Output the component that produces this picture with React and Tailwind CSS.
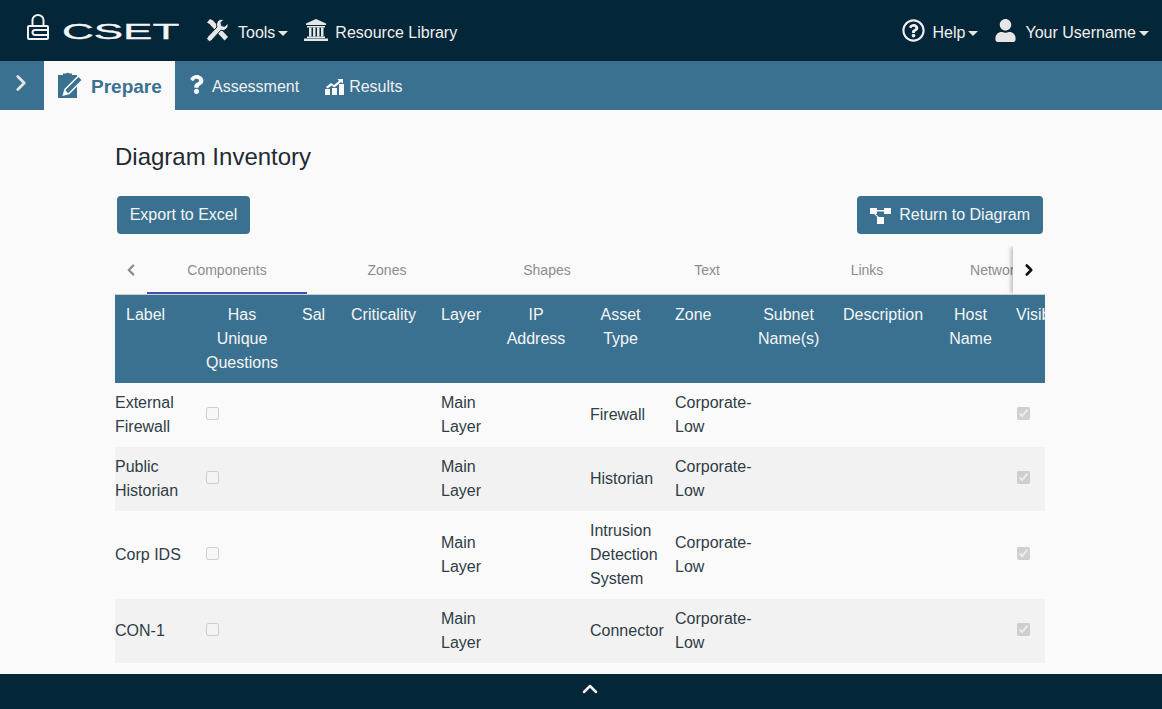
import React from "react";
import { FaRegQuestionCircle, FaUser, FaQuestion } from "react-icons/fa";
import { FiChevronRight, FiChevronUp } from "react-icons/fi";

const columns = [79, 96, 49, 90, 65, 84, 85, 83, 85, 106, 67, 90];

const headers = [
  { label: "Label", className: "text-left" },
  { label: "Has Unique Questions", className: "text-center" },
  { label: "Sal", className: "text-left" },
  { label: "Criticality", className: "text-left" },
  { label: "Layer", className: "text-left" },
  { label: "IP Address", className: "text-center" },
  { label: "Asset Type", className: "text-center" },
  { label: "Zone", className: "text-left" },
  { label: "Subnet Name(s)", className: "text-center" },
  { label: "Description", className: "text-left" },
  { label: "Host Name", className: "text-center" },
  { label: "Visible", className: "text-left" },
];

const rows = [
  { label: "External Firewall", type: "Firewall" },
  { label: "Public Historian", type: "Historian" },
  { label: "Corp IDS", type: "Intrusion Detection System" },
  { label: "CON-1", type: "Connector" },
];

const tabs = ["Components", "Zones", "Shapes", "Text", "Links", "Network Warnings"];

const Caret = () => (
  <span className="ml-[3px] mt-[1px] h-0 w-0 border-x-[5px] border-t-[5px] border-x-transparent border-t-[#e6e6e6]" />
);

const LockLogo = () => (
  <svg width="22" height="26" viewBox="0 0 22 26" fill="none" stroke="#f2f2f2" strokeWidth="2">
    <path d="M5.500 12V6a5.500 5 0 0 1 11 0v6" />
    <rect x="1" y="12" width="20" height="13" rx="1" />
    <path d="M21 16H8a2.500 2.500 0 0 0 0 5h13" />
  </svg>
);

const ToolsIcon = () => (
  <svg width="24" height="24" viewBox="0 0 24 24" className="mb-[6px] mr-2" fill="#e6e6e6">
    <path d="M1 4.500l3-3.500 3 1.500 15 16.500-3.500 3.500L3.500 6z" />
    <path d="M16 1.200a5.500 5.500 0 0 1 2 .3l-3 3 .6 3.200 3.200.6 3-3a5.500 5.500 0 0 1-7 7L5.500 22.500a2.500 2.500 0 0 1-3.800-3.800L11 9a5.500 5.500 0 0 1 5-7.800z" stroke="#032638" strokeWidth="1" />
  </svg>
);

const LibraryIcon = () => (
  <svg width="24" height="22" viewBox="0 0 24 22" className="mb-[6px] mr-[7px]" fill="#e6e6e6">
    <path d="M12 0l10 4.500v1.500H2V4.500z" />
    <rect x="3" y="7" width="18" height="1.500" />
    <rect x="5" y="8.500" width="2.500" height="9" />
    <rect x="9" y="8.500" width="2.500" height="9" />
    <rect x="13" y="8.500" width="2.500" height="9" />
    <rect x="17" y="8.500" width="2.500" height="9" />
    <rect x="3" y="17.500" width="18" height="1.500" />
    <rect x="0" y="19.500" width="24" height="2.500" />
  </svg>
);

const ClipboardIcon = () => (
  <svg width="25" height="27" viewBox="0 0 25 27">
    <path fill="#3a7191" d="M0 3h5V1.500h3a2 1.500 0 0 1 3.500 0h2.500V3h5v23H0z" />
    <path fill="#3a7191" stroke="#fafafa" strokeWidth="1.500" d="M20.500 4l4 4L11 21.500 5.500 23 7 17.500z" />
    <path fill="#fafafa" d="M7 18l3.500 3.500-5 1.500z" />
  </svg>
);

const ResultsIcon = () => (
  <svg width="19" height="17" viewBox="0 0 19 17" fill="#fafafa">
    <rect x="0" y="11" width="5" height="6" />
    <rect x="7" y="10" width="5" height="7" />
    <rect x="14" y="6" width="5" height="11" />
    <path d="M1 9l5-4 3 2 5-4-1.500-2H18v4.500L16 4l-6.500 5.500-3-2L2.500 10.500z" />
  </svg>
);

const DiagramIcon = () => (
  <svg width="21" height="17" viewBox="0 0 21 17" fill="#fafafa">
    <rect x="0" y="1" width="7" height="6" />
    <rect x="14" y="1" width="7" height="6" />
    <rect x="7" y="10" width="7" height="7" />
    <rect x="7" y="3" width="7" height="1.500" />
    <path d="M4 7h1.500l3.500 3H7.500z" />
  </svg>
);

const NavItem = ({ icon, label, caret }) => (
  <div className="flex items-center">
    {icon}
    <span className="text-[16px] text-[#f0f0f0]">{label}</span>
    {caret && <Caret />}
  </div>
);

const App = () => {
  return (
    <div className="flex h-screen flex-col overflow-hidden bg-[#fafafa] font-['Liberation_Sans',Arial,sans-serif] text-[16px] leading-6 text-[#2f3d46]">
      <header className="flex h-[61px] shrink-0 items-center bg-[#032638] pl-[27px] pr-[13px]">
        <div className="mb-[7px] flex items-end">
          <LockLogo />
          <span className="ml-[13px] w-[117px] origin-left scale-x-[2] text-[22px] leading-[16px] text-[#f5f5f5] [-webkit-text-stroke:0.3px_#f5f5f5]">
            CSET
          </span>
        </div>
        <div className="ml-[27px] mt-[5px] flex items-center">
          <NavItem icon={<ToolsIcon />} label="Tools" caret />
        </div>
        <div className="ml-[16px] mt-[5px] flex items-center">
          <NavItem icon={<LibraryIcon />} label="Resource Library" />
        </div>
        <div className="ml-auto mt-[5px] flex items-center">
          <NavItem icon={<FaRegQuestionCircle className="mb-[6px] mr-2 text-[23px] text-[#f0f0f0]" />} label="Help" caret />
          <div className="ml-[16px]">
            <NavItem icon={<FaUser className="mb-[6px] mr-2 text-[23px] text-[#e6e6e6]" />} label="Your Username" caret />
          </div>
        </div>
      </header>

      <nav className="flex h-[49px] shrink-0 items-center bg-[#3a7191]">
        <div className="flex w-[44px] justify-center">
          <FiChevronRight className="mb-[5px] mr-[3px] text-[26px] text-[#e6e6e6]" strokeWidth={2.500} />
        </div>
        <div className="flex h-full w-[131px] items-center bg-[#fafafa] pl-[14px]">
          <ClipboardIcon />
          <span className="ml-[8px] mt-[2px] text-[19px] font-bold text-[#3a7191]">Prepare</span>
        </div>
        <div className="ml-[12px] mt-[2px] flex items-center">
          <FaQuestion className="mb-1 mr-[6px] text-[19px] text-[#fafafa]" />
          <span className="text-[#f0f0f0]">Assessment</span>
        </div>
        <div className="ml-[26px] mt-[2px] flex items-center">
          <ResultsIcon />
          <span className="ml-[5px] text-[#f0f0f0]">Results</span>
        </div>
      </nav>

      <main className="min-h-0 flex-1 overflow-hidden pl-[115px]">
        <div className="w-[930px]">
          <h1 className="pt-[32px] text-[24px] leading-[29px] text-[#1f2a33]">Diagram Inventory</h1>

          <div className="mt-[25px] flex justify-between px-[2px]">
            <button className="h-[38px] w-[133px] rounded bg-[#3a7191] text-[#f5f5f5]">Export to Excel</button>
            <button className="flex h-[38px] items-center rounded bg-[#3a7191] px-[13px] text-[#f5f5f5]">
              <DiagramIcon />
              <span className="ml-2">Return to Diagram</span>
            </button>
          </div>

          <div className="relative mt-3 flex h-[49px] overflow-hidden border-b border-[#cfcfcf]">
            <div className="flex w-[32px] shrink-0 items-center justify-center">
              <FiChevronRight className="rotate-180 text-[18px] text-[#8a8a8a]" strokeWidth={3} />
            </div>
            <div className="flex">
              {tabs.map((tab, i) => (
                <div
                  key={tab}
                  className="relative flex h-full w-[160px] shrink-0 items-center justify-center whitespace-nowrap text-[14px] text-[#8c8c8c]"
                >
                  {tab}
                  {i === 0 && <span className="absolute bottom-0 left-0 h-[2px] w-full bg-[#3f51b5]" />}
                </div>
              ))}
            </div>
            <div className="absolute right-0 top-0 flex h-full w-[32px] items-center justify-center bg-[#fafafa] shadow-[-3px_0_4px_-1px_rgba(0,0,0,0.25)]">
              <FiChevronRight className="text-[18px] text-[#111]" strokeWidth={3.500} />
            </div>
          </div>

          <div className="overflow-hidden">
            <table className="w-[979px] table-fixed border-collapse">
              <colgroup>
                {columns.map((w, i) => (
                  <col key={i} style={{ width: w }} />
                ))}
              </colgroup>
              <thead>
                <tr className="bg-[#3a7191] text-[#f5f5f5]">
                  {headers.map((h) => (
                    <th key={h.label} className={"px-3 py-2 align-top font-normal first:pl-[11px] first:pr-0 " + h.className}>
                      {h.label}
                    </th>
                  ))}
                </tr>
              </thead>
              <tbody>
                {rows.map((row, i) => (
                  <tr key={row.label} className={i % 2 === 1 ? "bg-[#f2f2f2]" : ""}>
                    <td className="py-2 align-middle">{row.label}</td>
                    <td className="py-2 pl-3 align-middle">
                      <input type="checkbox" disabled className="m-0 mb-[4px] block" />
                    </td>
                    <td />
                    <td />
                    <td className="py-2 pl-3 align-middle">Main Layer</td>
                    <td />
                    <td className="py-2 pl-3 align-middle">{row.type}</td>
                    <td className="py-2 pl-3 align-middle">Corporate-Low</td>
                    <td />
                    <td />
                    <td />
                    <td className="py-2 pl-[13px] align-middle">
                      <input type="checkbox" disabled defaultChecked className="m-0 mb-[4px] block" />
                    </td>
                  </tr>
                ))}
              </tbody>
            </table>
          </div>
        </div>
      </main>

      <footer className="flex h-[35px] shrink-0 items-center justify-center bg-[#032638] pl-[18px]">
        <FiChevronUp className="mb-[5px] text-[24px] text-[#f0f0f0]" strokeWidth={2.500} />
      </footer>
    </div>
  );
};

export default App;
